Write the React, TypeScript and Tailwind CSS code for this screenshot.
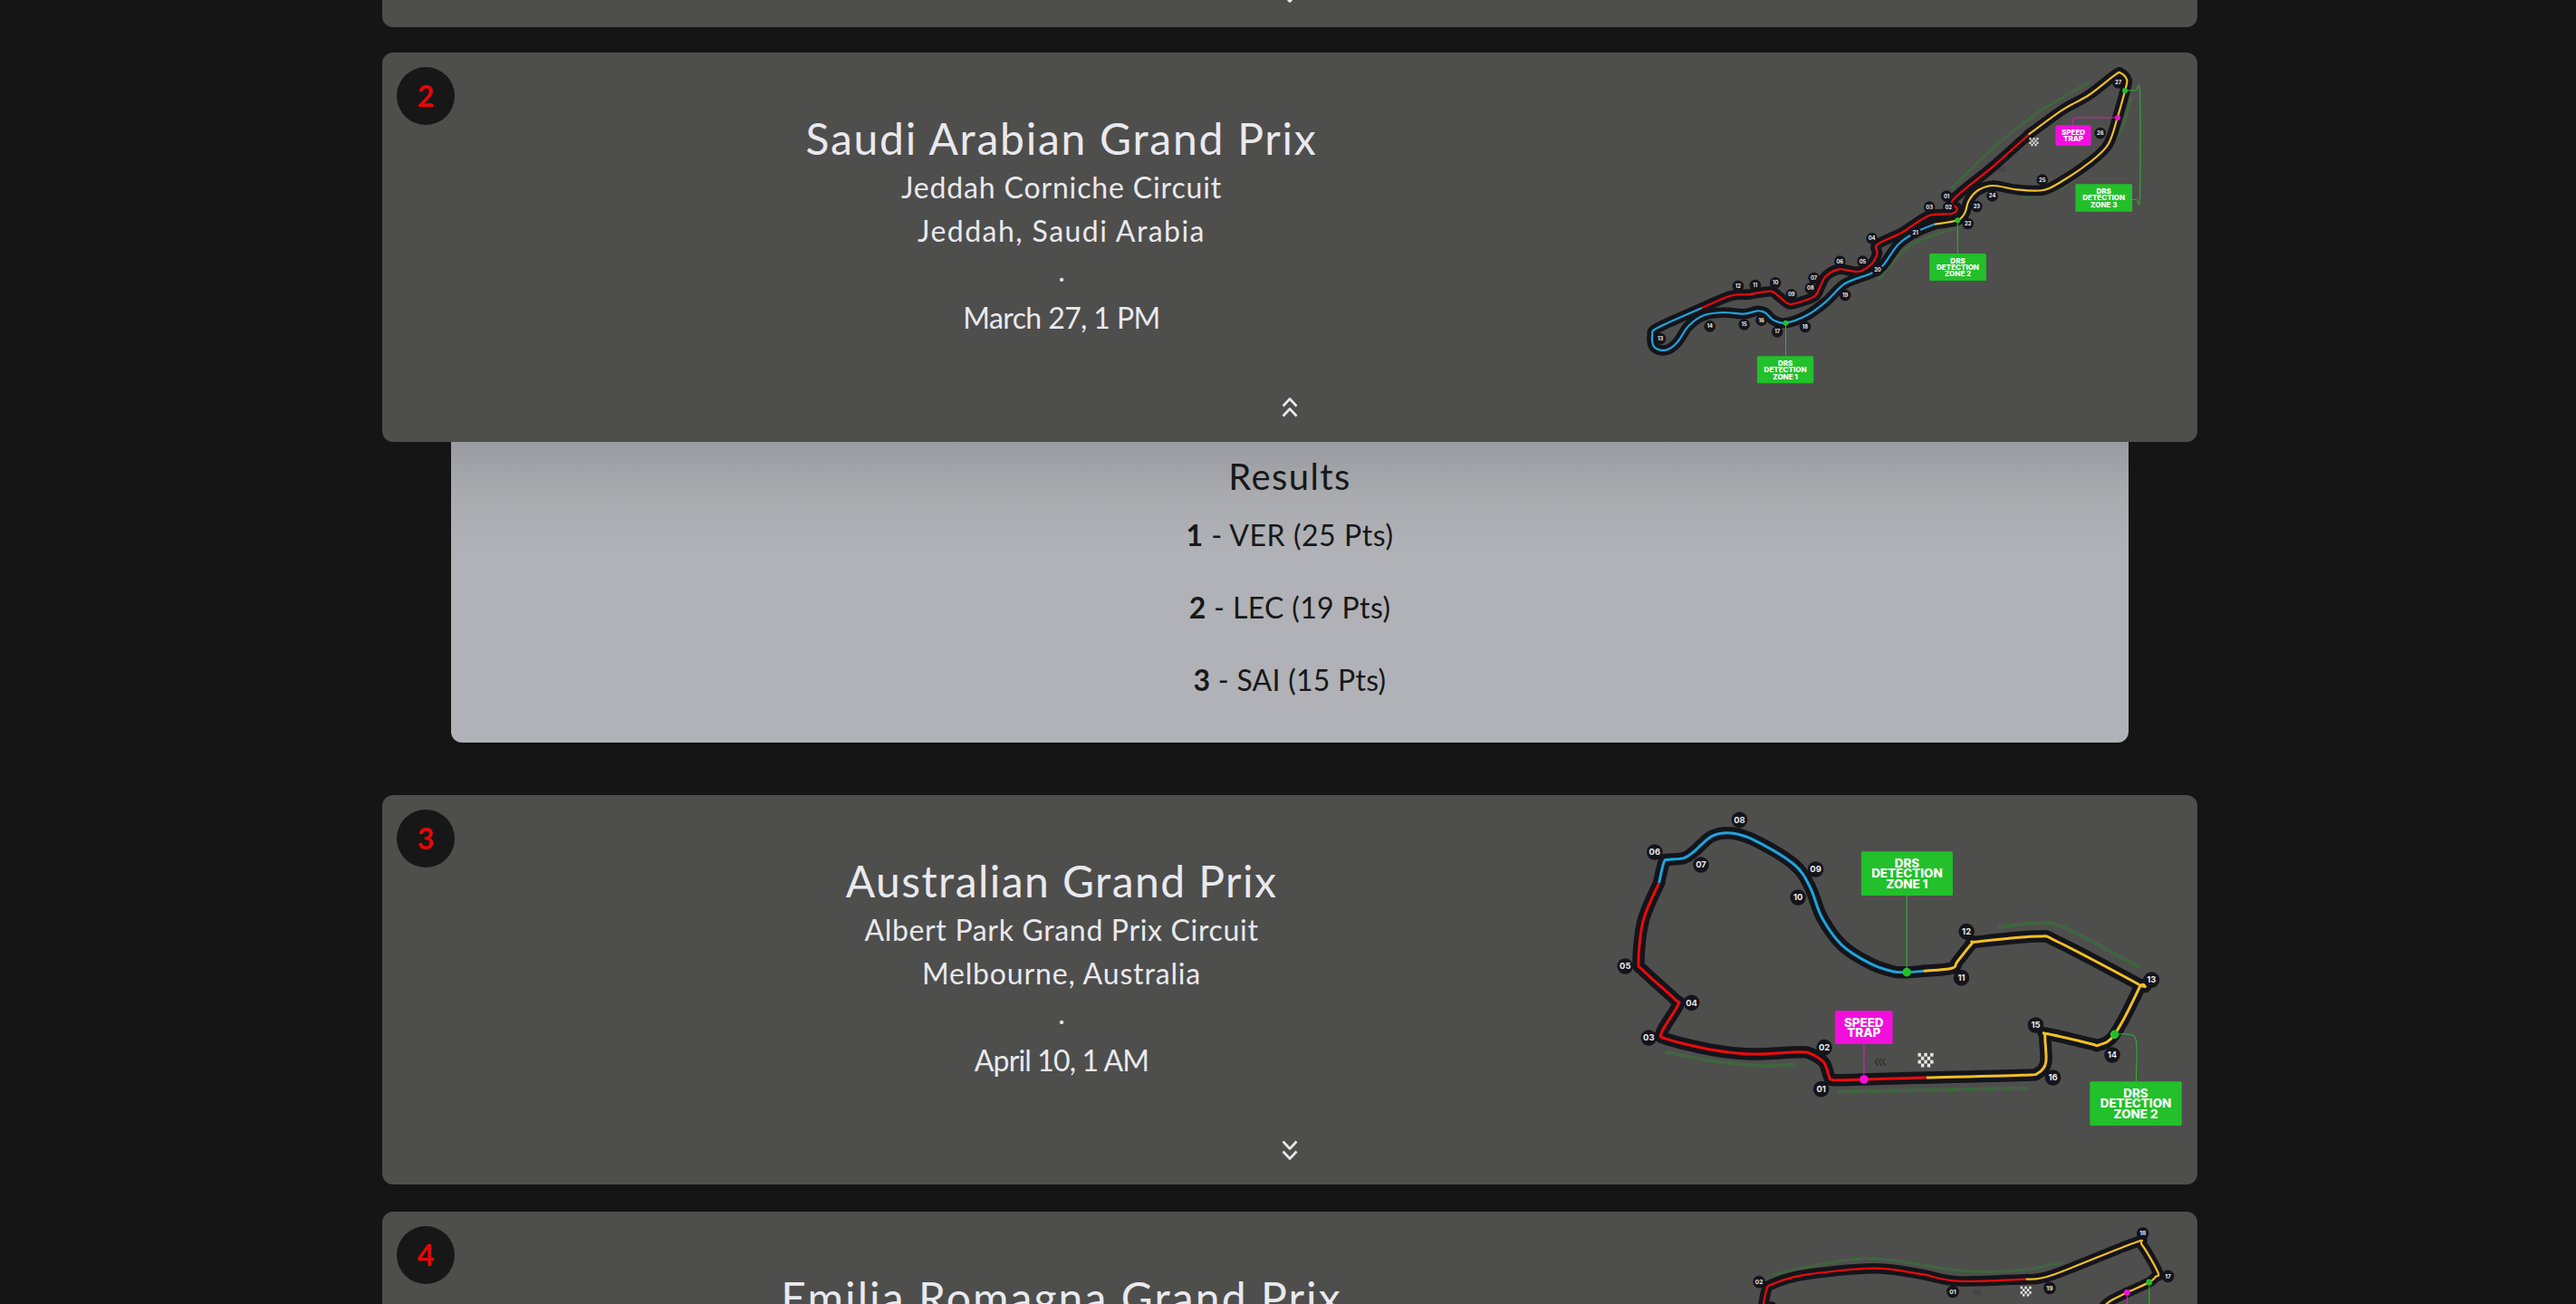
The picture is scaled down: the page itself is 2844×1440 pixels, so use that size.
import React from "react";

type Pt = [number, number];
type Box = [number, number, number, number];
type Cfg = {
  ox: number; oy: number; sx: number; sy: number; top: number;
  outer: number; inner: number; badgeR: number; badgeFont: number; labelFont: number; labelLine: number; dot: number; cell: number;
  sections: { color: string; pts: Pt[] }[];
  badges: [string, number, number][];
  dashes: Pt[][];
  leaders: { color: string; pts: Pt[] }[];
  dots: { color: string; at: Pt }[];
  labels: { color: string; box: Box; lines: string[] }[];
  checker: Pt;
  arrows: Pt;
};

const RED = "#ee0a0a";
const BLUE = "#1ea5dc";
const YELLOW = "#f2c024";
const GREEN = "#22c02a";
const PINK = "#f20fdc";
const FRONT = 1768;

function smooth(p: Pt[]) {
  let d = `M${p[0][0].toFixed(1)} ${p[0][1].toFixed(1)}`;
  for (let i = 0; i < p.length - 1; i++) {
    const a = p[Math.max(i - 1, 0)], b = p[i], c = p[i + 1], e = p[Math.min(i + 2, p.length - 1)];
    const k = 0.166;
    d += `C${(b[0] + (c[0] - a[0]) * k).toFixed(1)} ${(b[1] + (c[1] - a[1]) * k).toFixed(1)} ${(c[0] - (e[0] - b[0]) * k).toFixed(1)} ${(c[1] - (e[1] - b[1]) * k).toFixed(1)} ${c[0].toFixed(1)} ${c[1].toFixed(1)}`;
  }
  return d;
}

function Track({ c }: { c: Cfg }) {
  const m = (q: Pt): Pt => [c.ox + q[0] / c.sx - FRONT, c.oy + q[1] / c.sy - c.top];
  const paths = c.sections.map((s) => ({ color: s.color, d: smooth(s.pts.map(m)) }));
  const [chx, chy] = m(c.checker);
  const [arx, ary] = m(c.arrows);
  const h = c.cell * 1.15;
  return (
    <svg width="658" height="430" viewBox="0 0 658 430" className="block overflow-visible">
      {c.dashes.map((d, i) => (
        <path key={i} d={smooth(d.map(m))} fill="none" stroke="#2f8a2f" strokeWidth={c.inner + 1} strokeDasharray="1 1" opacity="0.75" />
      ))}
      {paths.map((p, i) => (
        <path key={i} d={p.d} fill="none" stroke="#14141b" strokeWidth={c.outer} strokeLinejoin="round" strokeLinecap="round" />
      ))}
      {paths.map((p, i) => (
        <path key={i} d={p.d} fill="none" stroke={p.color} strokeWidth={c.inner} strokeLinejoin="round" />
      ))}
      {c.leaders.map((l, i) => (
        <path key={i} d={smooth(l.pts.map(m))} fill="none" stroke={l.color} strokeWidth="1" />
      ))}
      {c.dots.map((d, i) => {
        const [x, y] = m(d.at);
        return <circle key={i} cx={x} cy={y} r={c.dot} fill={d.color} />;
      })}
      {c.labels.map((l, i) => {
        const [x1, y1] = m([l.box[0], l.box[1]]);
        const [x2, y2] = m([l.box[2], l.box[3]]);
        const start = (y1 + y2) / 2 - ((l.lines.length - 1) * c.labelLine) / 2 + c.labelFont * 0.36;
        return (
          <g key={i}>
            <rect x={x1} y={y1} width={x2 - x1} height={y2 - y1} rx="1.5" fill={l.color} />
            {l.lines.map((t, j) => (
              <text key={j} x={(x1 + x2) / 2} y={start + j * c.labelLine} textAnchor="middle" fontSize={c.labelFont} fontWeight="800" fill="#fff" fontFamily="Inter, sans-serif">{t}</text>
            ))}
          </g>
        );
      })}
      {c.badges.map(([t, bx, by]) => {
        const [x, y] = m([bx, by]);
        return (
          <g key={t}>
            <circle cx={x} cy={y} r={c.badgeR} fill="#14141b" />
            <text x={x} y={y + c.badgeFont * 0.36} textAnchor="middle" fontSize={c.badgeFont} fontWeight="700" fill="#e8e8ea" fontFamily="Inter, sans-serif">{t}</text>
          </g>
        );
      })}
      {[0, 1, 2, 3].map((r) =>
        [0, 1, 2, 3, 4].map((q) =>
          (r + q) % 2 === 0 ? <rect key={`${r}-${q}`} x={chx - 2.5 * c.cell + q * c.cell} y={chy - 2 * h + r * h} width={c.cell} height={h} fill="#e6e6e6" /> : null
        )
      )}
      {[0, 1, 2].map((n) => (
        <path key={n} d={`M${arx + (n - 1) * c.cell * 1.2 + c.cell} ${ary - c.cell * 1.2}l${-c.cell} ${c.cell * 1.2} ${c.cell} ${c.cell * 1.2}`} fill="none" stroke="#303030" strokeWidth={c.cell * 0.4} />
      ))}
    </svg>
  );
}

const saudi: Cfg = {
  ox: 1780, oy: 50, sx: 2.376, sy: 3, top: 58,
  outer: 11.5, inner: 2.2, badgeR: 6.3, badgeFont: 5.8, labelFont: 8, labelLine: 7.3, dot: 3, cell: 2,
  sections: [
    { color: YELLOW, pts: [[1092,296],[1180,215],[1250,165],[1320,97],[1335,93],[1350,115],[1345,150],[1325,240],[1300,330],[1250,390],[1180,450],[1130,480],[1060,478],[1000,465],[960,480],[935,515],[925,555],[905,580],[845,593]] },
    { color: BLUE, pts: [[845,593],[795,620],[750,660],[710,730],[680,755],[610,790],[560,850],[510,895],[455,920],[425,912],[400,885],[380,880],[345,890],[290,885],[240,895],[200,930],[170,985],[140,1010],[110,1000],[105,960],[120,935],[235,870]] },
    { color: RED, pts: [[235,870],[310,830],[360,825],[415,815],[435,830],[460,855],[480,855],[530,832],[545,800],[560,765],[595,742],[645,750],[680,725],[695,690],[695,660],[760,620],[830,565],[890,558],[905,540],[895,510],[1000,400],[1092,296]] },
  ],
  badges: [["01",877,500],["02",882,537],["03",832,536],["04",681,640],["05",657,716],["06",597,716],["07",529,771],["08",520,805],["09",470,826],["10",428,787],["11",375,795],["12",330,798],["13",126,972],["14",256,931],["15",346,925],["16",391,911],["17",433,949],["18",506,933],["19",611,828],["20",696,745],["21",795,620],["22",933,591],["23",956,534],["24",997,499],["25",1128,446],["26",1280,291],["27",1327,124]],
  dashes: [
    [[1252,122],[1120,220],[1000,340],[888,476]],
    [[1362,172],[1330,290],[1270,380],[1180,470],[1076,506]],
    [[900,607],[800,650],[750,700],[697,778]],
  ],
  leaders: [
    { color: GREEN, pts: [[455,920],[455,1030]] },
    { color: GREEN, pts: [[906,580],[906,690]] },
    { color: GREEN, pts: [[1345,150],[1372,150],[1384,160],[1384,500],[1375,511],[1364,511]] },
    { color: PINK, pts: [[1326,240],[1220,240],[1208,250],[1208,265]] },
  ],
  dots: [
    { color: GREEN, at: [455,920] },
    { color: GREEN, at: [906,580] },
    { color: GREEN, at: [1345,150] },
    { color: PINK, at: [1326,240] },
  ],
  labels: [
    { color: GREEN, box: [380,1030,528,1120], lines: ["DRS","DETECTION","ZONE 1"] },
    { color: GREEN, box: [832,690,981,780], lines: ["DRS","DETECTION","ZONE 2"] },
    { color: GREEN, box: [1215,460,1364,551], lines: ["DRS","DETECTION","ZONE 3"] },
    { color: PINK, box: [1163,265,1256,333], lines: ["SPEED","TRAP"] },
  ],
  checker: [1106,320],
  arrows: [1020,410],
};

const australia: Cfg = {
  ox: 1760, oy: 880, sx: 2.306, sy: 3, top: 878,
  outer: 13.5, inner: 3, badgeR: 8.8, badgeFont: 9.4, labelFont: 13.4, labelLine: 11.7, dot: 4.8, cell: 3.4,
  sections: [
    { color: RED, pts: [[846,930],[687,936],[610,938],[598,925],[585,880],[550,850],[520,845],[400,852],[300,838],[185,802],[172,780],[213,690],[205,670],[125,575],[113,545],[125,410],[165,285]] },
    { color: BLUE, pts: [[165,285],[178,215],[190,208],[230,202],[255,180],[300,130],[350,120],[410,145],[510,225],[550,300],[580,400],[630,490],[700,550],[760,578],[796,581],[838,577]] },
    { color: YELLOW, pts: [[838,577],[910,568],[925,545],[962,485],[975,480],[1130,462],[1180,480],[1385,620],[1388,632],[1325,787],[1285,822],[1265,818],[1155,785],[1148,795],[1150,880],[1130,915],[1090,922],[846,930]] },
  ],
  badges: [["01",578,968],["02",586,830],["03",139,798],["04",248,682],["05",79,561],["06",154,183],["07",272,225],["08",370,76],["09",564,240],["10",519,333],["11",935,599],["12",948,446],["13",1419,606],["14",1319,855],["15",1124,756],["16",1168,930]],
  dashes: [
    [[182,845],[300,875],[420,890],[512,888]],
    [[620,977],[1105,965]],
    [[1027,432],[1130,418],[1200,435],[1390,565]],
  ],
  leaders: [
    { color: GREEN, pts: [[796,327],[796,581]] },
    { color: GREEN, pts: [[1325,787],[1360,787],[1380,810],[1380,943]] },
    { color: PINK, pts: [[687,819],[687,936]] },
  ],
  dots: [
    { color: GREEN, at: [796,581] },
    { color: GREEN, at: [1325,787] },
    { color: PINK, at: [687,936] },
  ],
  labels: [
    { color: GREEN, box: [680,181,913,327], lines: ["DRS","DETECTION","ZONE 1"] },
    { color: GREEN, box: [1262,943,1496,1089], lines: ["DRS","DETECTION","ZONE 2"] },
    { color: PINK, box: [613,709,760,819], lines: ["SPEED","TRAP"] },
  ],
  checker: [844,872],
  arrows: [725,878],
};

const emilia: Cfg = {
  ox: 1860, oy: 1320, sx: 2.703, sy: 3, top: 1338,
  outer: 11.5, inner: 2.2, badgeR: 6.8, badgeFont: 6.6, labelFont: 8, labelLine: 7.3, dot: 3.4, cell: 2.4,
  sections: [
    { color: RED, pts: [[1018,278],[815,284],[700,260],[560,242],[350,265],[260,295],[245,310],[235,360],[225,420]] },
    { color: YELLOW, pts: [[1018,278],[1095,265],[1340,158],[1365,165],[1412,255],[1405,270],[1386,288],[1320,322],[1270,350],[1240,380]] },
  ],
  badges: [["02",222,287],["03",258,372],["01",800,319],["19",1089,307],["18",1367,126],["17",1442,268]],
  dashes: [[[262,263],[400,230],[570,210],[830,250],[1000,248],[1130,222]]],
  leaders: [
    { color: GREEN, pts: [[1386,288],[1386,420]] },
    { color: PINK, pts: [[1320,322],[1320,420]] },
  ],
  dots: [
    { color: GREEN, at: [1386,288] },
    { color: PINK, at: [1320,322] },
  ],
  labels: [],
  checker: [1018,318],
  arrows: [870,322],
};

function Chevrons({ up }: { up?: boolean }) {
  return (
    <svg width="18" height="24" viewBox="0 0 18 24" fill="none" stroke="#e8e8ec" strokeWidth="2.6" strokeLinejoin="round" className={up ? "block" : "block rotate-180"}>
      <path d="M1.500 10.500 9 2.500l7.500 8" />
      <path d="M1.500 21.500 9 13.500l7.500 8" />
    </svg>
  );
}

type Line = { text: string; cls: string };

function RaceCard({ round, title, titleCls, lines, open, cfg }: { round: number; title?: string; titleCls?: string; lines?: Line[]; open?: boolean; cfg?: Cfg }) {
  return (
    <section className="relative z-10 flex h-[430px] rounded-xl bg-[#4e4e4c] text-[#e9e9ee]">
      <div className="absolute left-4 top-4 flex h-16 w-16 items-center justify-center rounded-full bg-[#171717] text-[32px] font-bold text-[#e80606]">
        {round}
      </div>
      <div className="flex flex-1 flex-col items-center pl-[154px] pt-[66px] text-center text-[32px] leading-[48px]">
        {title && <h2 className={`mb-px text-[48px] leading-[58px] ${titleCls}`}>{title}</h2>}
        {lines?.map((l) => (
          <p key={l.text} className={l.cls}>{l.text}</p>
        ))}
      </div>
      <div className="w-[658px] shrink-0">{cfg && <Track c={cfg} />}</div>
      <div className="absolute bottom-[26px] left-1/2 -ml-[9px]">
        <Chevrons up={open} />
      </div>
    </section>
  );
}

function Result({ pos, text, cls }: { pos: number; text: string; cls: string }) {
  return (
    <p className={`mb-8 text-[32px] leading-[48px] last:mb-0 ${cls}`}>
      <b className="font-bold">{pos}</b> - {text}
    </p>
  );
}

export default function App() {
  return (
    <main className="h-screen overflow-hidden bg-[#151515]" style={{ fontFamily: "Lato, sans-serif" }}>
      <div className="ml-[422px] -mt-[400px] flex w-[2004px] flex-col gap-[30px]">
        <RaceCard round={1} />
        <div className="-mt-0.5">
          <RaceCard
            round={2}
            title="Saudi Arabian Grand Prix"
            titleCls="tracking-[1.75px]"
            lines={[
              { text: "Jeddah Corniche Circuit", cls: "tracking-[0.85px]" },
              { text: "Jeddah, Saudi Arabia", cls: "tracking-[1.45px]" },
              { text: ".", cls: "mb-2 leading-[40px]" },
              { text: "March 27, 1 PM", cls: "tracking-[-0.6px]" },
            ]}
            open
            cfg={saudi}
          />
          <div className="mx-[76px] mb-[28px] h-[332px] rounded-b-xl bg-[linear-gradient(#9a9ba0,#a9abaf_60px,#b1b2b7_125px)] pt-[14px] text-center text-[#181818] shadow-[0_0_90px_rgba(255,255,255,0.015)]">
            <h3 className="mb-[17px] text-[40px] leading-[48px] tracking-[1.4px]">Results</h3>
            <Result pos={1} text="VER (25 Pts)" cls="tracking-[0.55px]" />
            <Result pos={2} text="LEC (19 Pts)" cls="tracking-[0.35px]" />
            <Result pos={3} text="SAI (15 Pts)" cls="tracking-[0.25px]" />
          </div>
        </div>
        <RaceCard
          round={3}
          title="Australian Grand Prix"
          titleCls="tracking-[1.45px]"
          lines={[
            { text: "Albert Park Grand Prix Circuit", cls: "tracking-[0.67px]" },
            { text: "Melbourne, Australia", cls: "tracking-[0.85px]" },
            { text: ".", cls: "mb-2 leading-[40px]" },
            { text: "April 10, 1 AM", cls: "tracking-[-0.85px]" },
          ]}
          cfg={australia}
        />
        <RaceCard round={4} title="Emilia Romagna Grand Prix" titleCls="tracking-[2.1px]" cfg={emilia} />
      </div>
    </main>
  );
}
